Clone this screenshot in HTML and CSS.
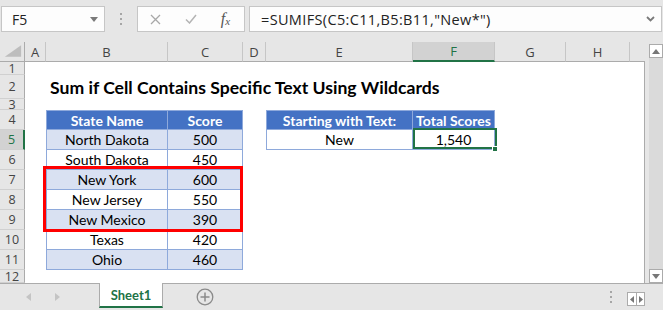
FILE: index.html
```html
<!DOCTYPE html>
<html lang="en">
<head>
  <meta charset="UTF-8" />
  <meta name="viewport" content="width=device-width, initial-scale=1.0"/>
  <title>Sum if Cell Contains Specific Text Using Wildcards</title>
  <link rel="stylesheet" href="styles.css">
</head>
<body>
  <!-- Formula bar -->
  <div class="formula-bar">
    <div class="name-box">
      <span>F5</span>
      <svg width="8" height="5" viewBox="0 0 8 5"><path d="M0 0h8L4 5z" fill="#7a7a7a"/></svg>
    </div>
    <div class="grip"><i></i><i></i><i></i></div>
    <div class="fx-box">
      <span class="slot">
        <svg width="11" height="11" viewBox="0 0 11 11"><path d="M1 1l9 9M10 1l-9 9" stroke="#a8a8a8" stroke-width="1.3"/></svg>
      </span>
      <span class="slot">
        <svg width="12" height="10" viewBox="0 0 12 10"><path d="M1 5.5l3.5 3.5L11 1" fill="none" stroke="#b4b4b4" stroke-width="1.5"/></svg>
      </span>
      <span class="slot fx">f<small>x</small></span>
    </div>
    <div class="formula">
      <span>=SUMIFS(C5:C11,B5:B11,"New*")</span>
      <svg width="9" height="6" viewBox="0 0 9 6"><path d="M1 1l3.5 3.5L8 1" fill="none" stroke="#7a7a7a" stroke-width="1.8"/></svg>
    </div>
  </div>

  <!-- Sheet + vertical scroll -->
  <div class="workbook">
    <div class="sheet">
      <div class="row head">
        <div class="corner"><svg width="25" height="20" viewBox="0 0 25 20"><path d="M5 15L22 3v12z" fill="#bdbdbd"/></svg></div>
        <div class="ch">A</div><div class="ch">B</div><div class="ch">C</div><div class="ch">D</div>
        <div class="ch">E</div><div class="ch on">F</div><div class="ch">G</div><div class="ch">H</div><div class="ch"></div>
      </div>

      <div class="row">
        <div class="rh">1</div><div></div><div></div><div></div><div></div><div></div><div></div><div></div><div></div><div></div>
      </div>
      <div class="row">
        <div class="rh">2</div><div></div>
        <div class="cell title">Sum if Cell Contains Specific Text Using Wildcards</div>
        <div></div><div></div><div></div><div></div><div></div><div></div><div></div>
      </div>
      <div class="row">
        <div class="rh">3</div><div></div><div></div><div></div><div></div><div></div><div></div><div></div><div></div><div></div>
      </div>
      <div class="row">
        <div class="rh">4</div><div></div>
        <div class="cell tb th first">State Name</div><div class="cell tb th">Score</div>
        <div></div>
        <div class="cell tb th first">Starting with Text:</div><div class="cell tb th">Total Scores</div>
        <div></div><div></div><div></div>
      </div>
      <div class="row">
        <div class="rh on">5</div><div></div>
        <div class="cell tb band first">North Dakota</div><div class="cell tb band">500</div>
        <div></div>
        <div class="cell tb first">New</div>
        <div class="cell tb pick">1,540<span class="handle"></span></div>
        <div></div><div></div><div></div>
      </div>
      <div class="row">
        <div class="rh">6</div><div></div>
        <div class="cell tb first">South Dakota</div><div class="cell tb">450</div>
        <div></div><div></div><div></div><div></div><div></div><div></div>
      </div>
      <div class="row">
        <div class="rh">7</div><div></div>
        <div class="cell tb band first">New York</div><div class="cell tb band">600</div>
        <div></div><div></div><div></div><div></div><div></div><div></div>
      </div>
      <div class="row">
        <div class="rh">8</div><div></div>
        <div class="cell tb first">New Jersey</div><div class="cell tb">550</div>
        <div></div><div></div><div></div><div></div><div></div><div></div>
      </div>
      <div class="row">
        <div class="rh">9</div><div></div>
        <div class="cell tb band first">New Mexico</div><div class="cell tb band">390</div>
        <div></div><div></div><div></div><div></div><div></div><div></div>
      </div>
      <div class="row">
        <div class="rh">10</div><div></div>
        <div class="cell tb first">Texas</div><div class="cell tb">420</div>
        <div></div><div></div><div></div><div></div><div></div><div></div>
      </div>
      <div class="row">
        <div class="rh">11</div><div></div>
        <div class="cell tb band first">Ohio</div><div class="cell tb band">460</div>
        <div></div><div></div><div></div><div></div><div></div><div></div>
      </div>
      <div class="row">
        <div class="rh">12</div><div></div><div></div><div></div><div></div><div></div><div></div><div></div><div></div><div></div>
      </div>

      <!-- highlight drawn over the "New*" rows -->
      <div class="red-box"></div>
    </div>

    <div class="vscroll">
      <div class="sbtn"><svg width="8" height="5" viewBox="0 0 8 5"><path d="M0 5h8L4 0z" fill="#777"/></svg></div>
      <div class="track"></div>
      <div class="sbtn"><svg width="8" height="5" viewBox="0 0 8 5"><path d="M0 0h8L4 5z" fill="#777"/></svg></div>
    </div>
  </div>

  <!-- Sheet tabs -->
  <div class="tabs">
    <div class="nav">
      <svg width="5" height="8" viewBox="0 0 5 8"><path d="M5 0v8L0 4z" fill="#c4c4c4"/></svg>
      <svg width="5" height="8" viewBox="0 0 5 8"><path d="M0 0v8l5-4z" fill="#c4c4c4"/></svg>
    </div>
    <div class="tab">Sheet1</div>
    <div class="add">
      <svg width="18" height="18" viewBox="0 0 18 18">
        <circle cx="9" cy="9" r="7.8" fill="none" stroke="#8a8a8a" stroke-width="1.3"/>
        <path d="M9 4.5v9M4.5 9h9" stroke="#8a8a8a" stroke-width="1.5"/>
      </svg>
    </div>
    <div class="spacer"></div>
    <div class="grip small"><i></i><i></i><i></i></div>
    <div class="hscroll">
      <span><svg width="4" height="7" viewBox="0 0 4 7"><path d="M4 0v7L0 3.5z" fill="#777"/></svg></span>
      <span><svg width="4" height="7" viewBox="0 0 4 7"><path d="M0 0v7l4-3.5z" fill="#777"/></svg></span>
    </div>
  </div>
</body>
</html>
```

FILE: styles.css
```css
* {
  box-sizing: border-box;
}

body {
  margin: 0;
  width: 663px;
  height: 310px;
  overflow: hidden;
  background-color: #e6e6e6;
  font-family: "Open Sans", Arial, sans-serif;
  color: #444;
}

/* formula bar */
.formula-bar {
  display: flex;
  align-items: flex-start;
  height: 42px;
  padding: 6px 1px 0 1px;
}

.name-box, .fx-box, .formula {
  height: 26px;
  background-color: #fdfdfd;
  border: 1px solid #c6c6c6;
}

.name-box {
  display: flex;
  align-items: center;
  justify-content: space-between;
  width: 104px;
  padding: 0 6px 0 10px;
  font-size: 14px;
  color: #222;
}

.grip {
  display: flex;
  flex-direction: column;
  align-items: center;
  justify-content: center;
  gap: 3px;
  width: 32px;
  height: 26px;
}

.grip i {
  width: 2px;
  height: 2px;
  background-color: #a6a6a6;
}

.fx-box {
  display: flex;
  width: 108px;
}

.fx-box .slot {
  display: flex;
  align-items: center;
  justify-content: center;
  width: 35px;
}

.fx {
  font-family: "Liberation Serif", serif;
  font-style: italic;
  font-size: 16px;
  color: #555;
}

.fx small {
  font-size: 11px;
  position: relative;
  top: 2px;
}

.formula {
  flex: 1;
  display: flex;
  align-items: center;
  justify-content: space-between;
  margin-left: 4px;
  padding: 0 6px 0 11px;
  font-size: 14.5px;
  letter-spacing: 0.35px;
  color: #222;
}

/* worksheet grid */
.workbook {
  display: flex;
  height: 241px;
}

.sheet {
  position: relative;
  display: grid;
  grid-template-columns: 25px 21px 122px 75px 23px 147px 82px 71px 64px 15px;
  grid-template-rows: 20px 13px 24px 11px repeat(8, 20px) 13px;
  width: 645px;
  background-color: #fff;
}

.row {
  display: contents;
}

.row:not(.head) > div:last-child {
  border-right: 1px solid #ababab;
}

.corner, .ch, .rh {
  display: flex;
  align-items: center;
  justify-content: center;
  overflow: hidden;
  background-color: #e6e6e6;
  color: #444;
}

.corner {
  border-right: 1px solid #ababab;
  border-bottom: 1px solid #ababab;
}

.ch {
  font-size: 13px;
  border-right: 1px solid #c6c6c6;
  border-bottom: 1px solid #ababab;
}

.ch:last-child {
  border-right: none;
}

.ch.on {
  background-color: #d2d2d2;
  color: #217346;
  border-bottom: 2px solid #217346;
}

.rh {
  font-size: 12.5px;
  border-right: 1px solid #ababab;
  border-bottom: 1px solid #d0d0d0;
}

.rh.on {
  background-color: #d2d2d2;
  color: #217346;
  border-right: 2px solid #217346;
}

.cell {
  display: flex;
  align-items: center;
  justify-content: center;
  white-space: nowrap;
  font-family: Lato, "Liberation Sans", sans-serif;
  font-size: 14px;
  color: #000;
}

.title {
  justify-content: flex-start;
  padding-left: 4px;
  font-size: 17.6px;
  font-weight: bold;
  overflow: visible;
}

.tb {
  border-right: 1px solid #8ea9db;
  border-bottom: 1px solid #8ea9db;
}

.tb.first {
  border-left: 1px solid #8ea9db;
}

.th {
  border-top: 1px solid #8ea9db;
  background-color: #4472c4;
  color: #fff;
  font-weight: bold;
}

.band {
  background-color: #d9e1f2;
}

.pick {
  position: relative;
}

.pick::after {
  content: '';
  position: absolute;
  top: -2px;
  left: 0;
  right: -3px;
  bottom: 0;
  border: 2px solid #217346;
}

.handle {
  position: absolute;
  right: -4px;
  bottom: -3px;
  width: 6px;
  height: 6px;
  background-color: #217346;
  border: 1px solid #fff;
  z-index: 1;
}

.red-box {
  position: absolute;
  left: 43px;
  top: 124px;
  width: 200px;
  height: 66px;
  border: 3px solid #f00;
}

/* vertical scroll bar */
.vscroll {
  display: flex;
  flex-direction: column;
  width: 14px;
  height: 239px;
  margin: 2px 0 0 4px;
  background-color: #dadada;
}

.sbtn {
  display: flex;
  align-items: center;
  justify-content: center;
  height: 14px;
  background-color: #fff;
  border: 1px solid #ababab;
}

.track {
  flex: 1;
}

/* sheet tabs */
.tabs {
  display: flex;
  align-items: flex-start;
  height: 27px;
  border-top: 1px solid #ababab;
}

.nav {
  display: flex;
  align-items: center;
  gap: 24px;
  width: 99px;
  height: 26px;
  padding-left: 26px;
}

.tab {
  display: flex;
  align-items: center;
  justify-content: center;
  width: 64px;
  height: 25px;
  margin-top: -1px;
  background-color: #fff;
  border-left: 1px solid #ababab;
  border-right: 1px solid #ababab;
  border-bottom: 2px solid #217346;
  font-family: Lato, "Liberation Sans", sans-serif;
  font-size: 13px;
  font-weight: bold;
  color: #217346;
}

.add {
  display: flex;
  align-items: center;
  height: 26px;
  margin-left: 33px;
}

.spacer {
  flex: 1;
}

.grip.small {
  width: 10px;
  height: 26px;
  margin-right: 11px;
}

.hscroll {
  display: flex;
  margin: 8px 18px 0 0;
  border: 1px solid #ababab;
  background-color: #fff;
}

.hscroll span {
  display: flex;
  align-items: center;
  justify-content: center;
  width: 8px;
  height: 12px;
}

.hscroll span + span {
  border-left: 1px solid #ababab;
}
```
